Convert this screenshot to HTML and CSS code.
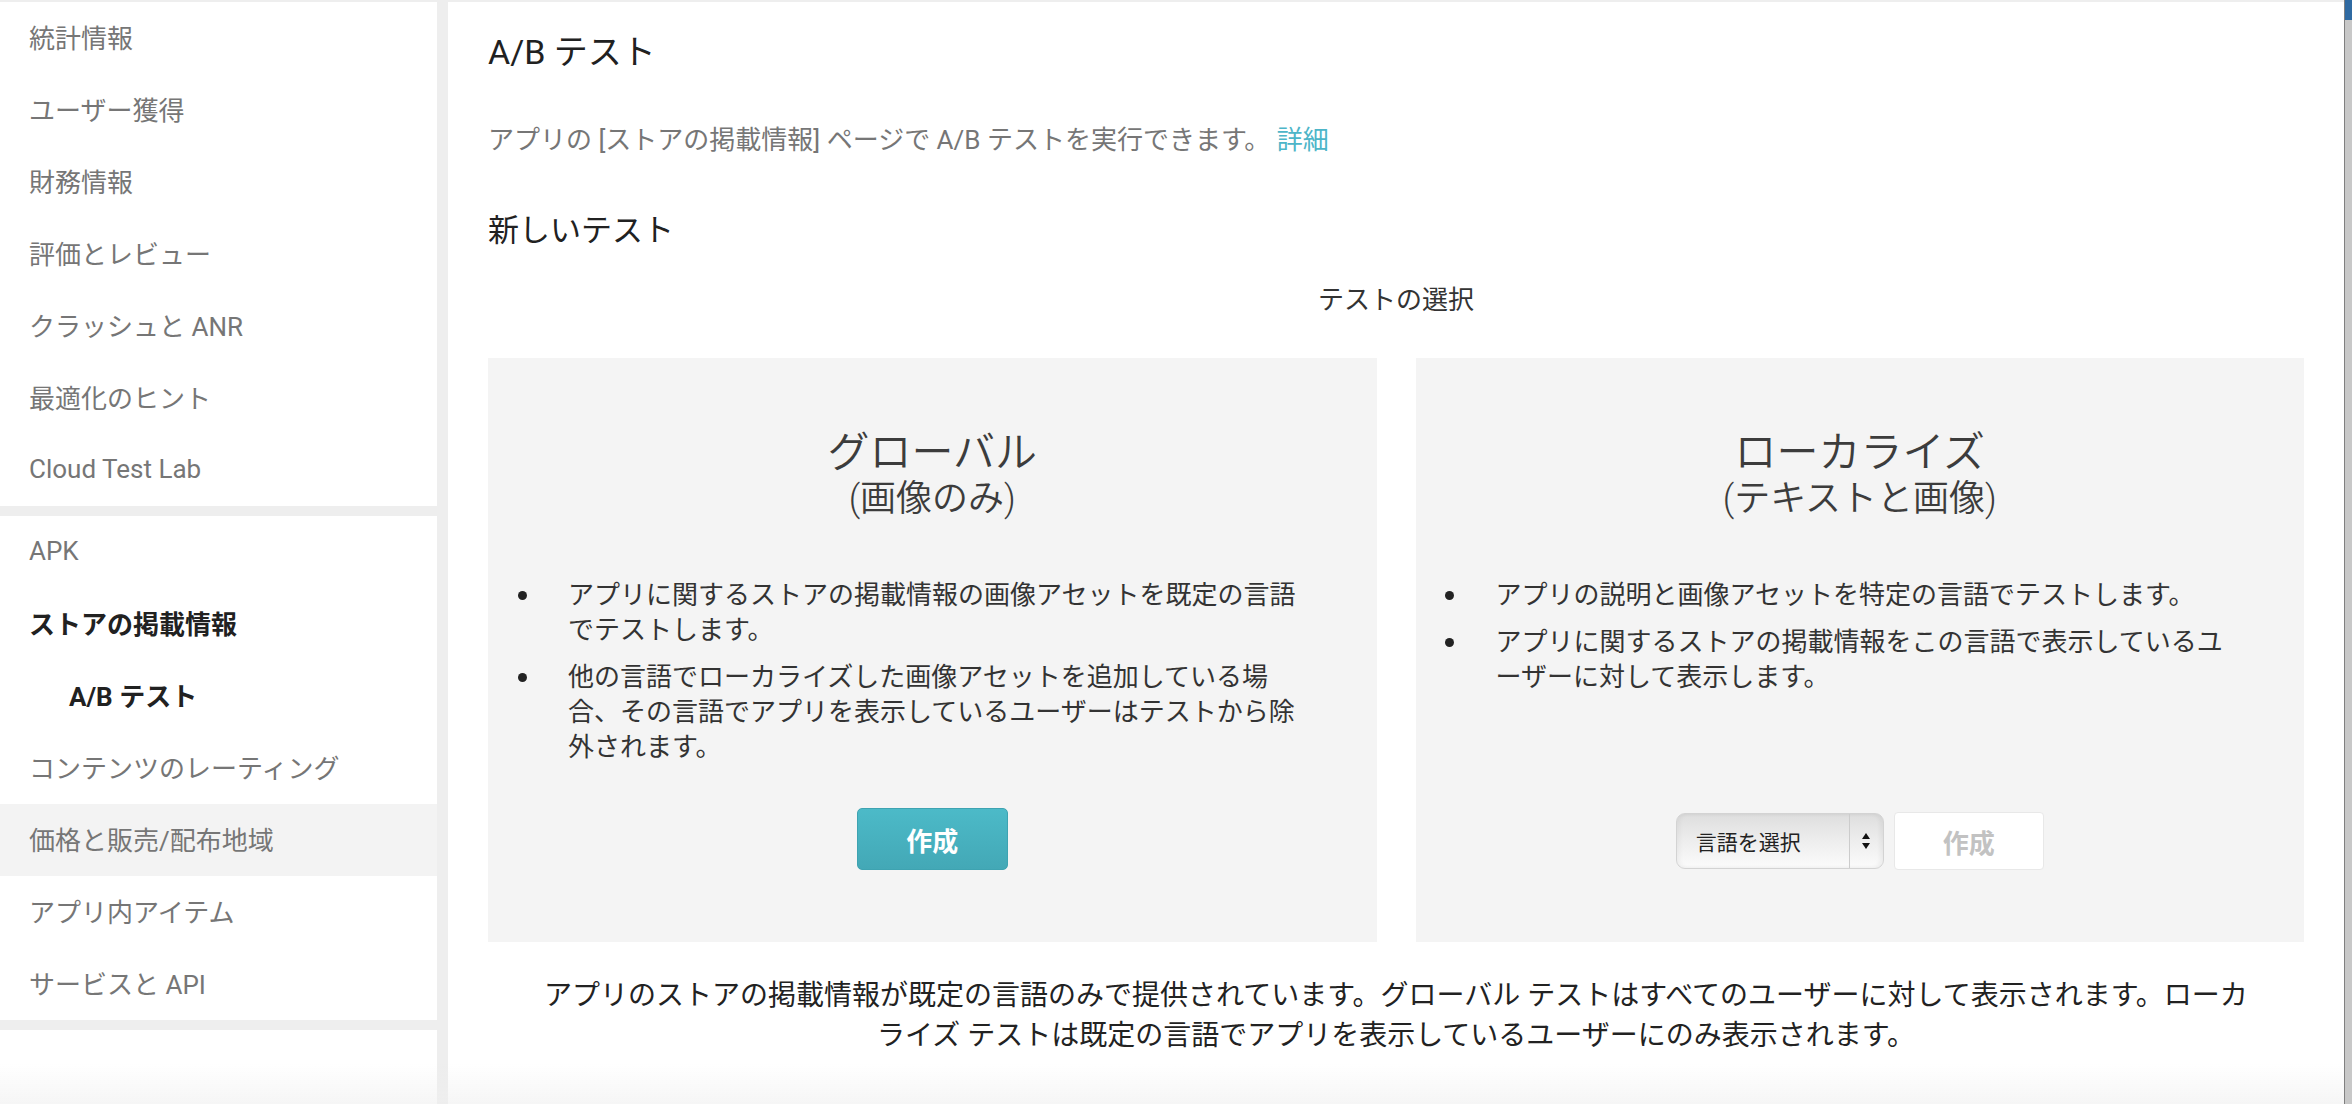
FILE: index.html
```html
<!DOCTYPE html>
<html lang="ja">
<head>
<meta charset="utf-8">
<title>A/B テスト</title>
<link rel="stylesheet" href="styles.css">
</head>
<body>
<div class="app">
  <nav class="sidebar">
    <ul class="nav-group">
      <li class="nav-item">統計情報</li>
      <li class="nav-item">ユーザー獲得</li>
      <li class="nav-item">財務情報</li>
      <li class="nav-item">評価とレビュー</li>
      <li class="nav-item">クラッシュと ANR</li>
      <li class="nav-item">最適化のヒント</li>
      <li class="nav-item">Cloud Test Lab</li>
    </ul>
    <ul class="nav-group">
      <li class="nav-item">APK</li>
      <li class="nav-item nav-active">ストアの掲載情報</li>
      <li class="nav-item nav-active nav-sub">A/B テスト</li>
      <li class="nav-item">コンテンツのレーティング</li>
      <li class="nav-item nav-hover">価格と販売/配布地域</li>
      <li class="nav-item">アプリ内アイテム</li>
      <li class="nav-item">サービスと API</li>
    </ul>
    <div class="nav-group nav-rest"></div>
  </nav>

  <main class="main">
    <h1 class="page-title">A/B テスト</h1>
    <p class="intro">アプリの [ストアの掲載情報] ページで A/B テストを実行できます。 <a class="link" href="#">詳細</a></p>
    <h2 class="section-title">新しいテスト</h2>
    <p class="choose">テストの選択</p>

    <div class="cards">
      <section class="card">
        <h3 class="card-title">グローバル<span class="card-sub">(画像のみ)</span></h3>
        <ul class="card-list">
          <li>アプリに関するストアの掲載情報の画像アセットを既定の言語でテストします。</li>
          <li>他の言語でローカライズした画像アセットを追加している場合、その言語でアプリを表示しているユーザーはテストから除外されます。</li>
        </ul>
        <div class="card-actions">
          <button class="btn-primary" type="button">作成</button>
        </div>
      </section>

      <section class="card">
        <h3 class="card-title">ローカライズ<span class="card-sub">(テキストと画像)</span></h3>
        <ul class="card-list">
          <li>アプリの説明と画像アセットを特定の言語でテストします。</li>
          <li>アプリに関するストアの掲載情報をこの言語で表示しているユーザーに対して表示します。</li>
        </ul>
        <div class="card-actions">
          <div class="select">
            <span class="select-label">言語を選択</span>
            <span class="select-arrow">
              <svg width="10" height="20" viewBox="0 0 10 20"><path d="M5 2 L9 8 L1 8 Z" fill="#111"/><path d="M1 12 L9 12 L5 18 Z" fill="#111"/></svg>
            </span>
          </div>
          <button class="btn-disabled" type="button" disabled>作成</button>
        </div>
      </section>
    </div>

    <p class="note">アプリのストアの掲載情報が既定の言語のみで提供されています。グローバル テストはすべてのユーザーに対して表示されます。ローカライズ テストは既定の言語でアプリを表示しているユーザーにのみ表示されます。</p>
  </main>

  <div class="scrollbar"><div class="scroll-thumb"></div></div>
</div>
<div class="bottom-fade"></div>
</body>
</html>
```

FILE: styles.css
```css
html, body {
  margin: 0;
  height: 100%;
}

body {
  background: #eeeeee;
  font-family: Roboto, "Noto Sans CJK JP", sans-serif;
  overflow: hidden;
}

.app {
  display: flex;
  height: 1104px;
}

/* ---------- sidebar ---------- */
.sidebar {
  width: 437px;
  flex: none;
  margin-top: 2px;
  display: flex;
  flex-direction: column;
  gap: 10px;
}

.nav-group {
  background: #ffffff;
  margin: 0;
  padding: 0;
  list-style: none;
}

.nav-rest {
  flex: 1;
}

.nav-item {
  height: 72px;
  display: flex;
  align-items: center;
  padding-left: 29px;
  padding-bottom: 3px;
  box-sizing: border-box;
  font-size: 26px;
  color: #767676;
  white-space: nowrap;
}

.nav-active {
  color: #212121;
  font-weight: 700;
}

.nav-sub {
  padding-left: 69px;
}

.nav-hover {
  background: #f3f3f3;
}

/* ---------- main ---------- */
.main {
  flex: 1;
  margin-left: 11px;
  margin-top: 2px;
  background: #ffffff;
  padding: 30px 40px 0 40px;
  min-width: 0;
}

.page-title {
  margin: 0;
  font-size: 34px;
  line-height: 40px;
  font-weight: 400;
  color: #212121;
}

.intro {
  margin: 50px 0 0;
  font-size: 26px;
  line-height: 36px;
  color: #767676;
}

.link {
  color: #4db5c8;
  text-decoration: none;
}

.section-title {
  margin: 53px 0 0;
  font-size: 31px;
  line-height: 40px;
  font-weight: 400;
  color: #212121;
}

.choose {
  margin: 31px 0 0;
  text-align: center;
  font-size: 26px;
  line-height: 36px;
  color: #333333;
}

.cards {
  margin-top: 40px;
  display: grid;
  grid-template-columns: 1fr 1fr;
  gap: 39px;
}

.card {
  background: #f4f4f4;
  padding: 72px 0 72px;
  display: flex;
  flex-direction: column;
}

.card-title {
  margin: 0;
  text-align: center;
  font-size: 42px;
  line-height: 46px;
  font-weight: 350;
  color: #3c3c3c;
}

.card-sub {
  display: block;
  margin-top: 2px;
  font-size: 36px;
  line-height: 42px;
}

.card-list {
  margin: 58px 0 0;
  padding: 0 69px 0 29.5px;
  list-style: none;
}

.card-list li {
  display: flex;
  font-size: 26px;
  line-height: 35px;
  color: #333333;
}

.card-list li + li {
  margin-top: 12px;
}

.card-list li::before {
  content: "";
  flex: none;
  width: 9px;
  height: 9px;
  border-radius: 50%;
  background: #222222;
  margin: 13px 41.5px 0 0;
}

.card-actions {
  margin-top: auto;
  padding-top: 43px;
  display: flex;
  justify-content: center;
  align-items: center;
  gap: 10px;
}

.btn-primary {
  width: 151px;
  height: 62px;
  box-sizing: border-box;
  border: 1px solid #3ea3b1;
  border-radius: 5px;
  background: linear-gradient(#4cbac8, #43a8b6);
  color: #ffffff;
  font-family: Roboto, "Noto Sans CJK JP", sans-serif;
  font-size: 26px;
  font-weight: 700;
  padding: 0;
}

.btn-disabled {
  width: 150px;
  height: 58px;
  box-sizing: border-box;
  border: 1px solid #e8e8e8;
  border-radius: 4px;
  background: #ffffff;
  color: #c2c2c2;
  font-family: Roboto, "Noto Sans CJK JP", sans-serif;
  font-size: 26px;
  font-weight: 700;
  padding: 0;
}

.select {
  width: 208px;
  height: 56px;
  box-sizing: border-box;
  border: 1.5px solid #d3d3d3;
  border-radius: 9px;
  background: linear-gradient(#dedede, #ececec 45%, #fbfbfb);
  box-shadow: inset 3px 0 4px rgba(0, 0, 0, 0.04), inset -3px 0 4px rgba(0, 0, 0, 0.05);
  display: flex;
  align-items: stretch;
}

.select-label {
  flex: 1;
  display: flex;
  align-items: center;
  padding-left: 19px;
  font-size: 21px;
  color: #222222;
}

.select-arrow {
  width: 33px;
  flex: none;
  border-left: 1px solid #cccccc;
  display: flex;
  align-items: center;
  justify-content: center;
}

.note {
  margin: 34px auto 0;
  max-width: 1730px;
  text-align: center;
  font-size: 28px;
  line-height: 40px;
  color: #222222;
}

/* ---------- scrollbar & fade ---------- */
.scrollbar {
  width: 8px;
  flex: none;
  box-sizing: border-box;
  background: #c8c8c8;
  border-left: 1px solid #808080;
}

.scroll-thumb {
  height: 20px;
  background: #2f6aa2;
}

.bottom-fade {
  position: fixed;
  left: 0;
  right: 8px;
  bottom: 0;
  height: 40px;
  background: linear-gradient(rgba(238, 238, 238, 0), rgba(238, 238, 238, 0.55));
  pointer-events: none;
}
```
